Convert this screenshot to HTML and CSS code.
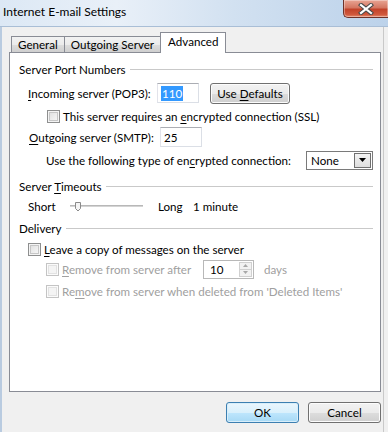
FILE: index.html
```html
<!DOCTYPE html>
<html>
<head>
<meta charset="utf-8">
<title>Internet E-mail Settings</title>
<link rel="stylesheet" href="styles.css">
</head>
<body>
<div class="window">
  <div class="titlebar">
    <span class="title">Internet E-mail Settings</span>
    <div class="close">
      <svg width="16" height="12" viewBox="0 0 16 12">
        <path d="M3 2 L13 10 M13 2 L3 10" stroke="#4a4a4a" stroke-width="4.2" stroke-linecap="square"/>
        <path d="M3 2 L13 10 M13 2 L3 10" stroke="#ffffff" stroke-width="2.2" stroke-linecap="square"/>
      </svg>
    </div>
  </div>
  <div class="client">
    <div class="tabs">
      <div class="tab">General</div>
      <div class="tab">Outgoing Server</div>
      <div class="tab active">Advanced</div>
    </div>
    <div class="panel">
      <div class="group"><span>Server Port Numbers</span></div>
      <div class="row r-in">
        <span class="lbl w-in"><u>I</u>ncoming server (POP3):</span>
        <span class="textbox"><span class="sel">110</span></span>
        <span class="btn small"><span>Use <u>D</u>efaults</span></span>
      </div>
      <div class="row r-ssl">
        <span class="cb"></span>
        <span>This server requires an <u>e</u>ncrypted connection (SSL)</span>
      </div>
      <div class="row r-out">
        <span class="lbl w-out"><u>O</u>utgoing server (SMTP):</span>
        <span class="textbox">25</span>
      </div>
      <div class="row r-use">
        <span>Use the following type of en<u>c</u>rypted connection:</span>
        <span class="select"><span class="sval">None</span><span class="arrow"><svg width="7" height="4" viewBox="0 0 7 4"><path d="M0 0 H7 L3.5 4 Z" fill="#000"/></svg></span></span>
      </div>
      <div class="group g2"><span>Server <u>T</u>imeouts</span></div>
      <div class="row r-short">
        <span class="w-short">Short</span>
        <svg class="slider" width="76" height="16" viewBox="0 0 76 16">
          <rect x="2" y="7" width="73" height="2" fill="#d4d4d4"/>
          <rect x="2" y="7" width="73" height="1" fill="#b8b8b8"/>
          <path d="M7.5 4.5 H12.5 V10.5 L10 13 L7.5 10.5 Z" fill="#f4f4f4" stroke="#8a8a8a"/>
        </svg>
        <span class="w-long">Long</span>
        <span>1 minute</span>
      </div>
      <div class="group g3"><span>Delivery</span></div>
      <div class="row r-leave">
        <span class="cb"></span>
        <span><u>L</u>eave a copy of messages on the server</span>
      </div>
      <div class="row r-after dis">
        <span class="cb off"></span>
        <span class="w-after"><u>R</u>emove from server after</span>
        <span class="spin"><span class="sv">10</span><span class="spb"><span class="up"><svg width="5" height="3" viewBox="0 0 5 3"><path d="M0 3 H5 L2.5 0 Z" fill="#a8a8a8"/></svg></span><span class="dn"><svg width="5" height="3" viewBox="0 0 5 3"><path d="M0 0 H5 L2.5 3 Z" fill="#a8a8a8"/></svg></span></span></span>
        <span class="days">days</span>
      </div>
      <div class="row r-del dis">
        <span class="cb off"></span>
        <span>Re<u>m</u>ove from server when deleted from 'Deleted Items'</span>
      </div>
    </div>
    <div class="buttons">
      <span class="btn big default">OK</span>
      <span class="btn big">Cancel</span>
    </div>
  </div>
</div>
</body>
</html>
```
FILE: styles.css
```css
* { box-sizing: border-box; }
body {
  margin: 0;
  font-family: Lato, "Noto Sans", sans-serif;
  font-size: 11.6px;
  color: #000;
  background: #f0f0f0;
}
u { text-decoration: underline; text-underline-offset: 2px; }
.window {
  width: 388px;
  height: 432px;
  overflow: hidden;
  background: #f0f0f0;
}
.titlebar {
  height: 27px;
  display: flex;
  align-items: flex-start;
  background: linear-gradient(90deg, #dce8f5 0%, #e9f0f8 30%, #d2e1f1 60%, #bcd2ea 100%);
  border-bottom: 1px solid #a9bed6;
}
.title {
  padding-left: 3px;
  line-height: 24px;
  font-size: 12px;
  color: #000;
}
.close {
  margin-left: auto;
  width: 45px;
  height: 18px;
  border: 1px solid #6e3229;
  border-top: none;
  border-right: none;
  border-radius: 0 0 0 5px;
  background: linear-gradient(#e8a594 0%, #d47762 45%, #c2432a 55%, #d0583c 85%, #e58a6d 100%);
  display: flex;
  align-items: center;
  justify-content: center;
  box-shadow: inset 0 0 0 1px rgba(255,255,255,0.35);
}
.client {
  height: 405px;
  width: 384px;
  border-left: 2px solid #b9cbe0;
  border-right: 1px solid #c9c9c9;
  display: flex;
  flex-direction: column;
}
.tabs {
  margin-top: 5px;
  padding-left: 9px;
  height: 20px;
  display: flex;
  align-items: flex-end;
}
.tab {
  height: 16px;
  padding: 0 6px;
  border: 1px solid #898c95;
  border-bottom: none;
  background: linear-gradient(#f2f2f2 0%, #ebebeb 50%, #dddddd 51%, #cfcfcf 100%);
  line-height: 15px;
}
.tab + .tab { margin-left: -1px; }
.tab.active {
  position: relative;
  z-index: 1;
  height: 21px;
  margin-bottom: -1px;
  padding: 0 7px;
  background: #fff;
  line-height: 18px;
}
.panel {
  margin-left: 7px;
  width: 372px;
  height: 340px;
  border: 1px solid #898c95;
  background: #fff;
  padding: 8px 7px 0 9px;
}
.group {
  height: 16px;
  display: flex;
  align-items: center;
  gap: 4px;
}
.group::after {
  content: "";
  flex: 1;
  height: 1px;
  background: #c9c9c9;
}
.g2 { margin-top: 9px; }
.g3 { margin-top: 6px; }
.row {
  display: flex;
  align-items: center;
  white-space: nowrap;
}
.r-in { height: 20px; margin-top: 6px; padding-left: 9px; }
.w-in { width: 129px; }
.r-ssl { height: 16px; margin-top: 5px; padding-left: 28px; }
.r-out { height: 20px; margin-top: 3px; padding-left: 10px; }
.w-out { width: 131px; }
.r-use { height: 18px; margin-top: 4px; padding-left: 27px; }
.r-short { height: 16px; margin-top: 4px; padding-left: 9px; }
.w-short { width: 40px; }
.slider { margin-right: 14px; }
.w-long { width: 35px; }
.r-leave { height: 16px; margin-top: 5px; padding-left: 9px; }
.r-after { height: 20px; margin-top: 2px; padding-left: 27px; }
.w-after { width: 141px; }
.r-del { height: 16px; margin-top: 4px; padding-left: 27px; }
.dis { color: #a0a0a0; }
.textbox {
  width: 42px;
  height: 20px;
  border: 1px solid #dbdfe6;
  border-top-color: #abadb3;
  border-left-color: #e2e3ea;
  padding-left: 3px;
  display: flex;
  align-items: center;
  background: #fff;
}
.sel {
  background: #3399ff;
  color: #fff;
  padding: 0 1px;
  line-height: 15px;
}
.cb {
  width: 13px;
  height: 13px;
  border: 1px solid #8e8f8f;
  background: linear-gradient(135deg, #dcdcdc, #fbfbfb);
  box-shadow: inset 0 0 0 1px #f4f4f4, inset 0 0 0 2px #c6c6c6;
  margin-right: 3px;
  flex: none;
}
.cb.off {
  border-color: #c4c4c4;
  background: #f4f4f4;
  box-shadow: inset 0 0 0 1px #fbfbfb, inset 0 0 0 2px #e2e2e2;
}
.btn {
  display: flex;
  align-items: center;
  justify-content: center;
  border: 1px solid #707070;
  border-radius: 3px;
  background: linear-gradient(#f2f2f2 0%, #ebebeb 50%, #dddddd 51%, #cfcfcf 100%);
  box-shadow: inset 0 0 0 1px #fcfcfc;
}
.btn.small {
  width: 80px;
  height: 21px;
  margin-left: 11px;
}
.btn.big {
  width: 73px;
  height: 21px;
}
.btn.default {
  border-color: #3c7fb1;
  background: linear-gradient(#eaf6fd 0%, #d9f0fc 50%, #bee6fd 51%, #a7d9f5 100%);
  box-shadow: inset 0 0 0 1px #d8eefa;
}
.select {
  margin-left: auto;
  width: 67px;
  height: 19px;
  border: 1px solid #7a7a7a;
  display: flex;
  align-items: center;
  background: #fff;
  padding: 1px;
}
.sval { flex: 1; padding-left: 3px; }
.arrow {
  width: 17px;
  height: 15px;
  border: 1px solid #707070;
  background: linear-gradient(#f3f3f3, #dedede);
  display: flex;
  align-items: center;
  justify-content: center;
}
.spin {
  width: 51px;
  height: 19px;
  border: 1px solid #b8b8b8;
  display: flex;
  align-items: center;
  background: #fff;
  padding: 1px;
}
.sv { flex: 1; padding-left: 5px; color: #000; }
.spb {
  width: 13px;
  height: 15px;
  display: flex;
  flex-direction: column;
}
.spb > span {
  flex: 1;
  border: 1px solid #d0d0d0;
  background: #f2f2f2;
  display: flex;
  align-items: center;
  justify-content: center;
}
.spb .dn { border-top: none; }
.days { margin-left: 10px; }
.buttons {
  margin-top: 10px;
  display: flex;
  justify-content: flex-end;
  gap: 9px;
  padding-right: 2px;
}
```
